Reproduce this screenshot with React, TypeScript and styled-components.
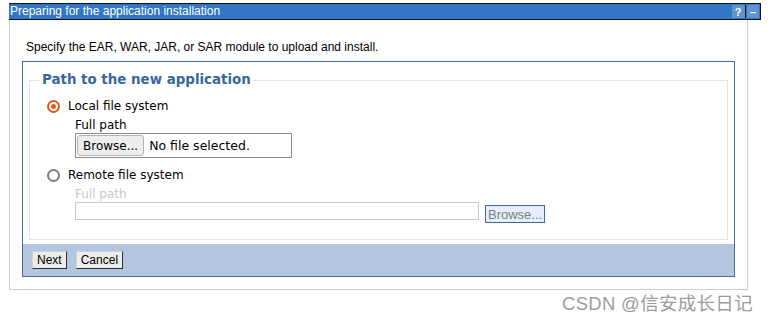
import styled, { createGlobalStyle } from "styled-components";

const GlobalStyle = createGlobalStyle`
  html, body {
    margin: 0;
    padding: 0;
    background: #ffffff;
  }
`;

const Page = styled.div`
  position: relative;
  width: 768px;
  height: 320px;
  padding: 3px 0 0 9px;
  box-sizing: border-box;
  font-family: "Liberation Sans", Arial, sans-serif;
`;

const TitleBar = styled.div`
  width: 752px;
  height: 17px;
  box-sizing: border-box;
  background: #3177c6;
  border: 1px solid #111;
  border-left: none;
  display: flex;
  align-items: center;
  justify-content: space-between;
  color: #ffffff;
  font-size: 12px;
  padding-left: 1px;
`;

const TitleText = styled.span`
  line-height: 15px;
`;

const TitleIcons = styled.div`
  display: flex;
  align-items: center;
  height: 100%;
`;

const TitleIcon = styled.span<{ $sep?: boolean }>`
  width: 12px;
  height: 13px;
  display: flex;
  align-items: center;
  justify-content: center;
  background: rgba(255, 255, 255, 0.22);
  color: #ffffff;
  font-weight: bold;
  font-size: 11px;
  margin-right: 1px;
  border-right: ${(p) => (p.$sep ? "1px solid #111" : "none")};
  padding-right: ${(p) => (p.$sep ? "1px" : "0")};
`;

const Panel = styled.div`
  width: 739px;
  height: 270px;
  box-sizing: border-box;
  border: 1px solid #cccccc;
  border-top: none;
`;

const Intro = styled.p`
  margin: 0;
  padding: 20px 0 0 16px;
  font-size: 12px;
  color: #000;
  line-height: 14px;
`;

const Box = styled.div`
  margin: 7px 0 0 12px;
  width: 713px;
  height: 216px;
  box-sizing: border-box;
  border: 1px solid #4a67a8;
  display: flex;
  flex-direction: column;
`;

const BoxBody = styled.div`
  flex: 1;
  padding: 9px 6px 4px 6px;
`;

const Fieldset = styled.fieldset`
  margin: 0;
  padding: 0 0 16px 10px;
  border: 1px solid #e3e3e3;
  font-family: "DejaVu Sans", sans-serif;
`;

const Legend = styled.legend`
  padding: 0 2px;
  margin: 0;
  color: #39679c;
  font-weight: bold;
  font-size: 13.4px;
  line-height: 18px;
`;

const FieldsetBody = styled.div`
  padding-left: 7px;
`;

const OptionRow = styled.label`
  display: flex;
  align-items: center;
  gap: 8px;
  font-size: 12px;
  line-height: 18px;
  color: #000;
  margin-top: 8px;
`;

const Radio = styled.span<{ $checked?: boolean }>`
  width: 13px;
  height: 13px;
  box-sizing: border-box;
  border-radius: 50%;
  border: 2px solid ${(p) => (p.$checked ? "#e9541f" : "#7d7a80")};
  display: flex;
  align-items: center;
  justify-content: center;

  &::after {
    content: "";
    width: 5px;
    height: 5px;
    border-radius: 50%;
    background: ${(p) => (p.$checked ? "#e9541f" : "transparent")};
  }
`;

const Field = styled.div`
  padding-left: 28px;
  margin-top: 2px;
`;

const FieldLabel = styled.div<{ $disabled?: boolean }>`
  font-size: 12px;
  line-height: 16px;
  color: ${(p) => (p.$disabled ? "#c8c8c8" : "#000")};
`;

const FileBox = styled.div`
  width: 217px;
  height: 25px;
  box-sizing: border-box;
  border: 1px solid #8b8b8b;
  display: flex;
  align-items: center;
  gap: 5px;
  padding-left: 1px;
  font-size: 12.5px;
`;

const GtkButton = styled.span`
  height: 21px;
  box-sizing: border-box;
  padding: 0 5px;
  display: flex;
  align-items: center;
  border: 1px solid #b3b3b3;
  border-radius: 3px;
  background: #ededed;
  font-size: 12px;
`;

const RemoteRow = styled.div`
  display: flex;
  align-items: flex-start;
  gap: 6px;
`;

const TextInput = styled.div`
  width: 404px;
  height: 18px;
  box-sizing: border-box;
  border: 1px solid #c9c9c9;
`;

const LinkButton = styled.span`
  margin-top: 3px;
  height: 18px;
  box-sizing: border-box;
  padding: 0 2px;
  display: flex;
  align-items: center;
  border: 1px solid #3c6aa3;
  background: #e6eefb;
  color: #808080;
  font-family: "Liberation Sans", Arial, sans-serif;
  font-size: 13px;
`;

const Footer = styled.div`
  height: 32px;
  background: #b4c5de;
  display: flex;
  align-items: center;
  gap: 9px;
  padding-left: 9px;
`;

const PlainButton = styled.span`
  height: 18px;
  box-sizing: border-box;
  padding: 0 4px;
  display: flex;
  align-items: center;
  border: 1px solid #2f2f2f;
  border-top-color: #d0d0d0;
  border-left-color: #d0d0d0;
  background: #ececec;
  font-size: 12px;
  color: #000;
`;

const Watermark = styled.div`
  position: absolute;
  left: 562px;
  top: 289px;
  font-family: "Liberation Sans", "Noto Sans CJK SC", sans-serif;
  font-size: 18.5px;
  color: #9c9c9c;
  letter-spacing: 0.3px;
`;

export default function App() {
  return (
    <>
      <GlobalStyle />
      <Page>
        <TitleBar>
          <TitleText>Preparing for the application installation</TitleText>
          <TitleIcons>
            <TitleIcon $sep>?</TitleIcon>
            <TitleIcon>–</TitleIcon>
          </TitleIcons>
        </TitleBar>
        <Panel>
          <Intro>Specify the EAR, WAR, JAR, or SAR module to upload and install.</Intro>
          <Box>
            <BoxBody>
              <Fieldset>
                <Legend>Path to the new application</Legend>
                <FieldsetBody>
                  <OptionRow>
                    <Radio $checked />
                    Local file system
                  </OptionRow>
                  <Field>
                    <FieldLabel>Full path</FieldLabel>
                    <FileBox>
                      <GtkButton>Browse...</GtkButton>
                      No file selected.
                    </FileBox>
                  </Field>
                  <OptionRow>
                    <Radio />
                    Remote file system
                  </OptionRow>
                  <Field>
                    <FieldLabel $disabled>Full path</FieldLabel>
                    <RemoteRow>
                      <TextInput />
                      <LinkButton>Browse...</LinkButton>
                    </RemoteRow>
                  </Field>
                </FieldsetBody>
              </Fieldset>
            </BoxBody>
            <Footer>
              <PlainButton>Next</PlainButton>
              <PlainButton>Cancel</PlainButton>
            </Footer>
          </Box>
        </Panel>
        <Watermark>CSDN @信安成长日记</Watermark>
      </Page>
    </>
  );
}
